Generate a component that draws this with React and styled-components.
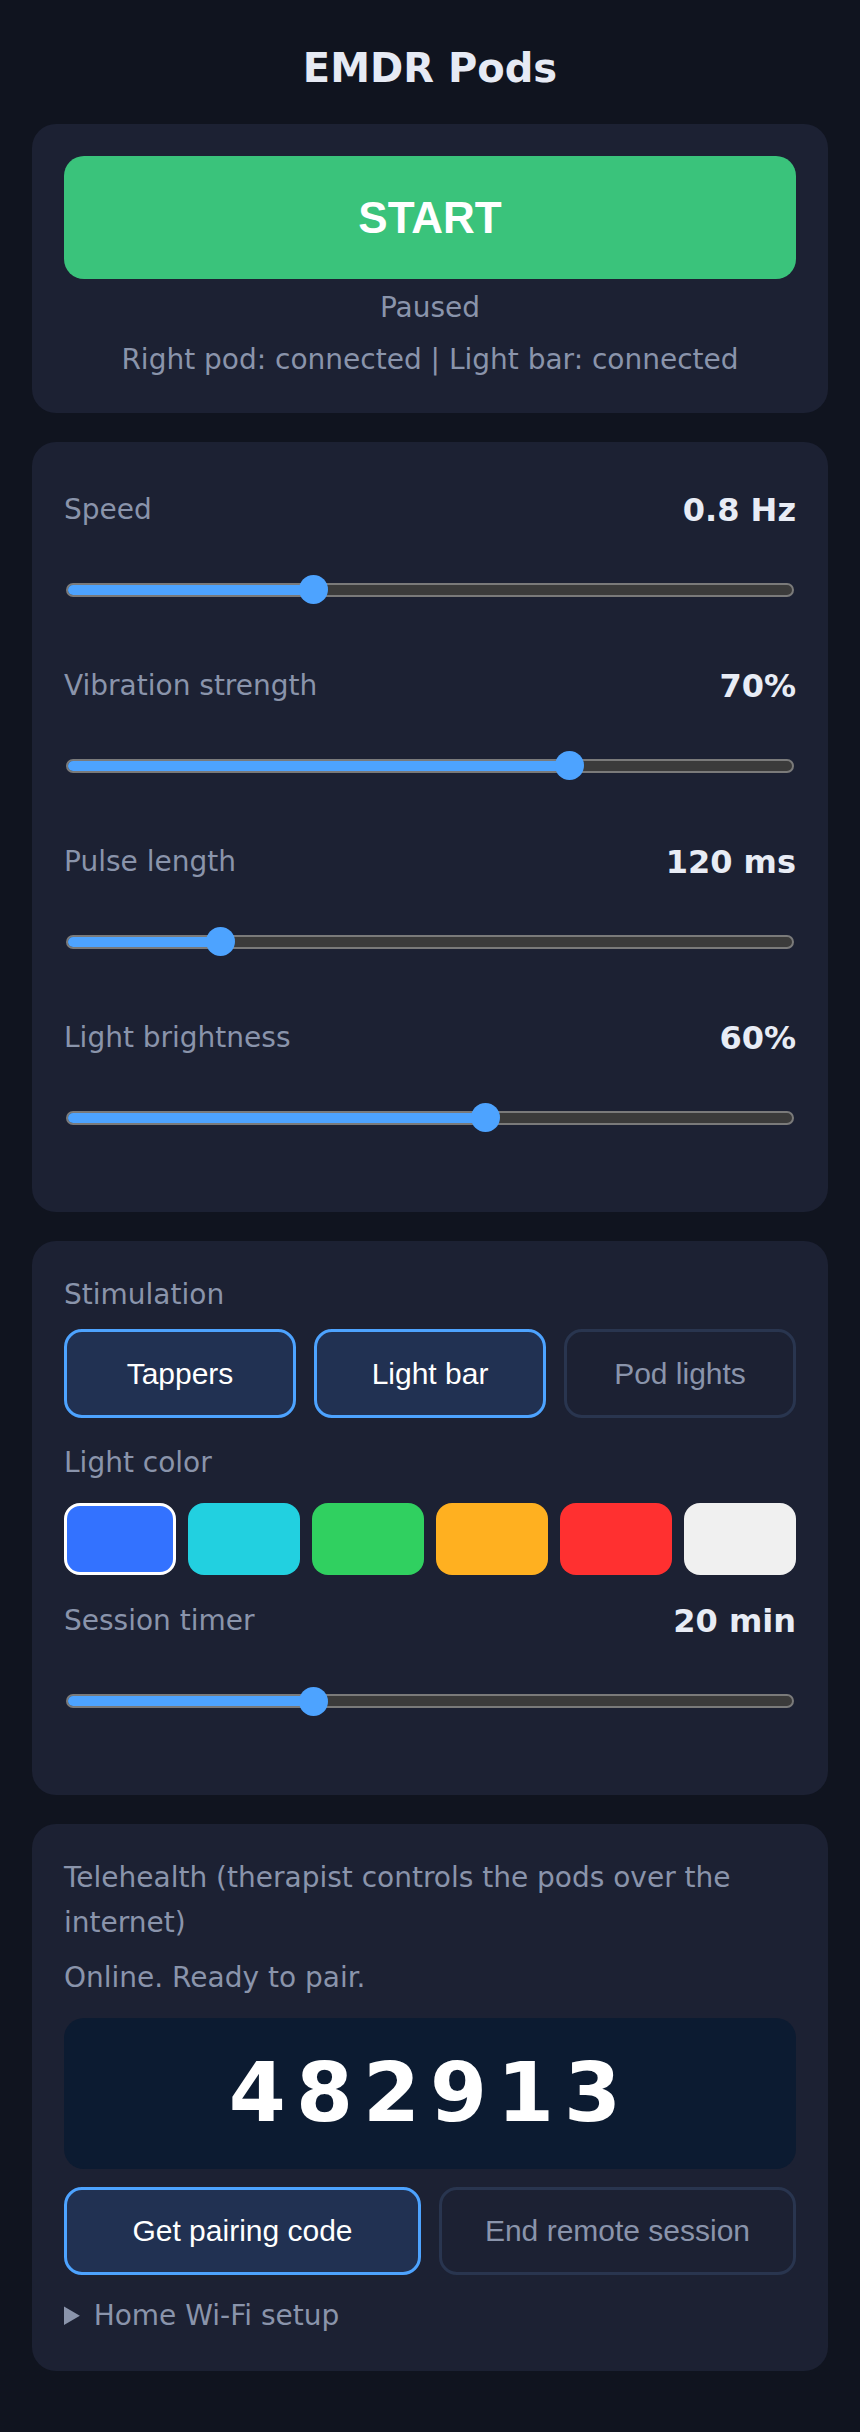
import React from 'react';
import styled, { createGlobalStyle } from 'styled-components';

const GlobalStyle = createGlobalStyle`
  html, body {
    margin: 0;
    background: #10141f;
  }

  body {
    font-family: "DejaVu Sans", "Noto Sans", sans-serif;
    font-size: 28px;
    line-height: 1.6;
    color: #e6ebf5;
  }
`

const Page = styled.main`
  box-sizing: border-box;
  min-height: 100vh;
  padding: 0 32px 60px;
`

const Title = styled.h1`
  margin: 44px 0 32px;
  font-size: 40px;
  line-height: 48px;
  font-weight: 700;
  text-align: center;
  color: #e6eaf4;
`

const Cards = styled.div`
  display: flex;
  flex-direction: column;
  gap: 29px;
`

const Card = styled.section`
  display: flex;
  flex-direction: column;
  padding: 32px 32px ${props => props.$bottom || 34}px;
  border-radius: 24px;
  background: #1c2133;
`

const StartButton = styled.button`
  height: 123px;
  border: none;
  border-radius: 20px;
  background: #3ac37b;
  color: #fff;
  font-family: "Liberation Sans", Arial, sans-serif;
  font-size: 44px;
  font-weight: 700;
  cursor: pointer;
`

const Muted = styled.div`
  margin-top: ${props => props.$top || 0}px;
  margin-bottom: ${props => props.$bottom || 0}px;
  color: #8a94ab;
  text-align: ${props => (props.$center ? 'center' : 'left')};
`

const SliderGroup = styled.div`
  padding: 11px 0 45px;
`

const SliderHead = styled.div`
  display: flex;
  justify-content: space-between;
  align-items: center;
  height: 51px;
`

const Value = styled.span`
  font-size: 32px;
  font-weight: 700;
  color: #e8ecf5;
`

const SliderBox = styled.div`
  position: relative;
  display: flex;
  align-items: center;
  height: 30px;
  margin: 39px 2px 0;
`

const Rail = styled.div`
  flex: 1;
  box-sizing: border-box;
  height: 14px;
  border: 2px solid #7a7a7a;
  border-radius: 7px;
  background: #3b3b3b;
  overflow: hidden;
`

const Fill = styled.div`
  height: 100%;
  background: #4da3ff;
`

const Thumb = styled.div`
  position: absolute;
  top: 0.5px;
  width: 29px;
  height: 29px;
  border-radius: 50%;
  background: #4da3ff;
`

const ToggleRow = styled.div`
  display: grid;
  grid-template-columns: repeat(${props => props.$cols}, 1fr);
  gap: 18px;
`

const Toggle = styled.button`
  box-sizing: border-box;
  height: ${props => props.$height || 88}px;
  border: 3px solid ${props => (props.$active ? '#4da3ff' : '#29354f')};
  border-radius: 18px;
  background: ${props => (props.$active ? '#213152' : 'transparent')};
  color: ${props => (props.$active ? '#ffffff' : '#8a94ab')};
  font-family: "Liberation Sans", Arial, sans-serif;
  font-size: 30px;
  cursor: pointer;
`

const Swatches = styled.div`
  display: grid;
  grid-template-columns: repeat(6, 1fr);
  gap: 12px;
  margin-bottom: 10px;
`

const Swatch = styled.button`
  box-sizing: border-box;
  height: 72px;
  padding: 0;
  border: ${props => (props.$selected ? '3px solid #ffffff' : 'none')};
  border-radius: 16px;
  background: ${props => props.$color};
  cursor: pointer;
`

const CodeBox = styled.div`
  display: flex;
  align-items: center;
  justify-content: center;
  height: 151px;
  margin: 17px 0 18px;
  border-radius: 20px;
  background: #0c1b31;
  color: #ffffff;
  font-size: 82px;
  font-weight: 700;
  letter-spacing: 10px;
  line-height: 1;
`

const WifiSetup = styled.details`
  margin-top: 19px;
  color: #8a94ab;

  summary {
    cursor: pointer;
  }
`

const Slider = ({ label, value, pct }) => (
  <SliderGroup>
    <SliderHead>
      <Muted as="span">{label}</Muted>
      <Value>{value}</Value>
    </SliderHead>
    <SliderBox>
      <Rail>
        <Fill style={{ width: `calc(12.5px + ${pct} * (100% - 25px))` }} />
      </Rail>
      <Thumb style={{ left: `calc(${pct} * (100% - 29px))` }} />
    </SliderBox>
  </SliderGroup>
);

const colors = ['#3372ff', '#22d0e0', '#30d060', '#ffb020', '#ff3030', '#f0f0f0'];

const App = () => (
  <Page>
    <GlobalStyle />
    <Title>EMDR Pods</Title>
    <Cards>
      <Card $bottom={30}>
        <StartButton>START</StartButton>
        <Muted $top={7} $center>Paused</Muted>
        <Muted $top={7} $center>Right pod: connected | Light bar: connected</Muted>
      </Card>

      <Card>
        <Slider label="Speed" value="0.8 Hz" pct={0.334} />
        <Slider label="Vibration strength" value="70%" pct={0.7} />
        <Slider label="Pulse length" value="120 ms" pct={0.2} />
        <Slider label="Light brightness" value="60%" pct={0.58} />
      </Card>

      <Card>
        <Muted $bottom={12}>Stimulation</Muted>
        <ToggleRow $cols={3}>
          <Toggle $active $height={89}>Tappers</Toggle>
          <Toggle $active $height={89}>Light bar</Toggle>
          <Toggle $height={89}>Pod lights</Toggle>
        </ToggleRow>
        <Muted $top={23} $bottom={17}>Light color</Muted>
        <Swatches>
          {colors.map((c, i) => (
            <Swatch key={c} $color={c} $selected={i === 0} />
          ))}
        </Swatches>
        <Slider label="Session timer" value="20 min" pct={0.334} />
      </Card>

      <Card $bottom={33}>
        <Muted>Telehealth (therapist controls the pods over the internet)</Muted>
        <Muted $top={10}>Online. Ready to pair.</Muted>
        <CodeBox>482913</CodeBox>
        <ToggleRow $cols={2}>
          <Toggle $active>Get pairing code</Toggle>
          <Toggle>End remote session</Toggle>
        </ToggleRow>
        <WifiSetup>
          <summary>Home Wi-Fi setup</summary>
        </WifiSetup>
      </Card>
    </Cards>
  </Page>
);

export default App;
